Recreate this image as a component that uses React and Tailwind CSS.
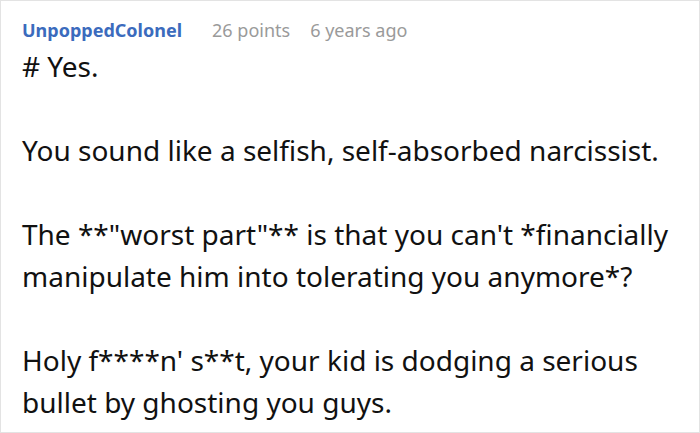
import React from 'react';

const lines = [
  '# Yes.',
  '',
  'You sound like a selfish, self-absorbed narcissist.',
  '',
  'The **"worst part"** is that you can\'t *financially',
  'manipulate him into tolerating you anymore*?',
  '',
  'Holy f****n\' s**t, your kid is dodging a serious',
  'bullet by ghosting you guys.',
];

export default function App() {
  return (
    <div className="w-[700px] h-[433px] bg-white border border-[#e3e3e3] overflow-hidden font-['Noto_Sans',sans-serif]">
      <div className="pl-[21px] pt-[14px]">
        <div className="flex items-baseline text-[18px] leading-[30px]">
          <span className="font-bold text-[#3b6bbd]">UnpoppedColonel</span>
          <span className="ml-[30px] text-[#9a9a9a]">26 points</span>
          <span className="ml-[20px] text-[#9a9a9a]">6 years ago</span>
        </div>
        <div className="text-[28px] leading-[42px] text-[#111]">
          {lines.map((l, i) => (
            <div key={i} className="h-[42px] whitespace-nowrap">{l}</div>
          ))}
        </div>
      </div>
    </div>
  );
}
